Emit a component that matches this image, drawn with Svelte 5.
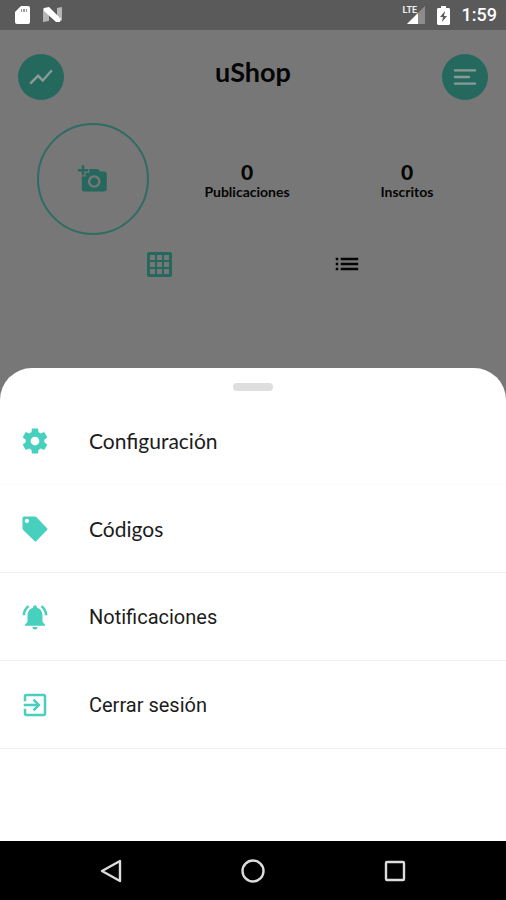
<script>
	const stats = [
		{ value: 0, label: "Publicaciones" },
		{ value: 0, label: "Inscritos" },
	];

	const menu = [
		{
			label: "Configuración",
			icon: "M19.43 12.98c.04-.32.07-.64.07-.98s-.03-.66-.07-.98l2.11-1.65c.19-.15.24-.42.12-.64l-2-3.46c-.12-.22-.39-.3-.61-.22l-2.49 1c-.52-.4-1.08-.73-1.69-.98l-.38-2.65C14.46 2.18 14.25 2 14 2h-4c-.25 0-.46.18-.49.42l-.38 2.65c-.61.25-1.17.59-1.69.98l-2.49-1c-.23-.09-.49 0-.61.22l-2 3.46c-.13.22-.07.49.12.64l2.11 1.65c-.04.32-.07.65-.07.98s.03.66.07.98l-2.11 1.65c-.19.15-.24.42-.12.64l2 3.46c.12.22.39.3.61.22l2.49-1c.52.4 1.08.73 1.69.98l.38 2.65c.03.24.24.42.49.42h4c.25 0 .46-.18.49-.42l.38-2.65c.61-.25 1.17-.59 1.69-.98l2.49 1c.23.09.49 0 .61-.22l2-3.46c.12-.22.07-.49-.12-.64l-2.11-1.65zM12 15.5c-1.93 0-3.5-1.57-3.5-3.5s1.57-3.5 3.5-3.5 3.5 1.57 3.5 3.5-1.57 3.5-3.5 3.5z",
		},
		{
			label: "Códigos",
			icon: "M3.4 2H12l1 .4 8.8 9.1c.3.3.3.8 0 1.1l-8.9 9.2c-.3.3-.8.3-1.1 0l-9.3-9-.5-1V3.4C2 2.6 2.6 2 3.4 2zM5.5 7.2a1.7 1.7 0 1 0 0-3.4 1.7 1.7 0 0 0 0 3.4z",
		},
		{
			label: "Notificaciones",
			roboto: true,
			icon: "M7.58 4.08L6.15 2.65C3.75 4.48 2.17 7.3 2.03 10.5h2c.15-2.65 1.51-4.97 3.55-6.42zm12.39 6.42h2c-.15-3.2-1.73-6.02-4.12-7.85l-1.42 1.43c2.02 1.45 3.39 3.77 3.54 6.42zM18 11c0-3.07-1.64-5.64-4.5-6.32V4c0-.83-.67-1.5-1.5-1.5s-1.5.67-1.5 1.5v.68C7.63 5.36 6 7.92 6 11v5l-2 2v1h16v-1l-2-2v-5zm-6 11c.14 0 .27-.01.4-.04.65-.14 1.18-.58 1.44-1.18.1-.24.15-.5.15-.78h-4c.01 1.1.9 2 2.01 2z",
		},
		{
			label: "Cerrar sesión",
			roboto: true,
			icon: "M10.09 15.59L11.5 17l5-5-5-5-1.41 1.41L12.67 11H3v2h9.67l-2.58 2.59zM19 3H5c-1.11 0-2 .9-2 2v4h2V5h14v14H5v-4H3v4c0 1.1.89 2 2 2h14c1.1 0 2-.9 2-2V5c0-1.1-.9-2-2-2z",
		},
	];
</script>

<div class="screen">
	<div class="status">
		<svg width="16" height="18" viewBox="0 0 16 18">
			<path fill="#fff" d="M6 0h7a2 2 0 0 1 2 2v14a2 2 0 0 1-2 2H2a2 2 0 0 1-2-2V6z" />
			<path fill="#999" d="M6 3h1v3H6zM8 3h2v3H8zM11 3h1v3h-1z" />
		</svg>
		<svg width="20" height="16" viewBox="0 0 20 16">
			<path fill="#b5b5b5" d="M0 1l6 4v9l-6 1zM14 1l5-1v14l-5-4z" />
			<path fill="#fff" d="M1 1l5-1 12 12-1 3h-4L1 4z" />
		</svg>
		<div class="signal">
			<span>LTE</span>
			<svg width="18" height="18" viewBox="0 0 18 18">
				<path fill="#8c8c8c" d="M18 0v18H0z" />
				<path fill="#fff" d="M11 7v11H0z" />
			</svg>
		</div>
		<svg width="13" height="19" viewBox="0 0 13 19">
			<path fill="#fff" d="M4 0h5v2h3l1 1v15l-1 1H1l-1-1V3l1-1h3z" />
			<path fill="#5a5a5a" d="M8 5l-5 6h3l-1 5 5-6H7z" />
		</svg>
		<time>1:59</time>
	</div>

	<main>
		<header>
			<button class="round" aria-label="Estadísticas">
				<svg width="28" height="28" viewBox="0 0 24 24">
					<path fill="currentColor" d="M3.5 18.49l6-6.01 4 4L22 6.92l-1.41-1.41-7.09 7.97-4-4L2 16.99z" />
				</svg>
			</button>
			<h1>uShop</h1>
			<button class="round" aria-label="Menú">
				<svg width="24" height="18" viewBox="0 0 24 18">
					<path stroke="currentColor" stroke-width="2.4" stroke-linecap="round" d="M2 2.4h20M2 9h14M2 15.6h20" />
				</svg>
			</button>
		</header>

		<section class="profile">
			<button class="photo" aria-label="Agregar foto">
				<svg width="30" height="30" viewBox="0 0 24 24">
					<path fill="currentColor" d="M3 4V1h2v3h3v2H5v3H3V6H0V4h3zm3 6V7h3V4h7l1.83 2H21c1.1 0 2 .9 2 2v12c0 1.1-.9 2-2 2H5c-1.1 0-2-.9-2-2V10h3zm7 9c2.76 0 5-2.24 5-5s-2.24-5-5-5-5 2.24-5 5 2.24 5 5 5zm-3.2-5c0 1.77 1.43 3.2 3.2 3.2s3.2-1.43 3.2-3.2-1.43-3.2-3.2-3.2-3.2 1.43-3.2 3.2z" />
				</svg>
			</button>
			{#each stats as stat}
				<p><b>{stat.value}</b>{stat.label}</p>
			{/each}
		</section>

		<div class="tabs">
			<button class="active" aria-label="Cuadrícula">
				<svg width="25" height="25" viewBox="0 0 25 25">
					<path fill="currentColor" fill-rule="evenodd" d="M2 0h21a2 2 0 0 1 2 2v21a2 2 0 0 1-2 2H2a2 2 0 0 1-2-2V2a2 2 0 0 1 2-2zM3 3v5h5V3zm7 0v5h5V3zm7 0v5h5V3zM3 10v5h5v-5zm7 0v5h5v-5zm7 0v5h5v-5zM3 17v5h5v-5zm7 0v5h5v-5zm7 0v5h5v-5z" />
				</svg>
			</button>
			<button aria-label="Lista">
				<svg width="30" height="30" viewBox="0 0 24 24">
					<path fill="currentColor" d="M3 13h2v-2H3v2zm0 4h2v-2H3v2zm0-8h2V7H3v2zm4 4h14v-2H7v2zm0 4h14v-2H7v2zM7 7v2h14V7H7z" />
				</svg>
			</button>
		</div>
	</main>

	<div class="sheet">
		<div class="handle"></div>
		{#each menu as item}
			<button class="item" class:roboto={item.roboto}>
				<svg width="30" height="30" viewBox="0 0 24 24">
					<path fill="#46d0bd" fill-rule="evenodd" d={item.icon} />
				</svg>
				{item.label}
			</button>
		{/each}
	</div>

	<nav>
		<button aria-label="Atrás">
			<svg width="26" height="26" viewBox="0 0 26 26">
				<path d="M22 3v20L4 13z" />
			</svg>
		</button>
		<button aria-label="Inicio">
			<svg width="26" height="26" viewBox="0 0 26 26">
				<circle cx="13" cy="13" r="10.5" />
			</svg>
		</button>
		<button aria-label="Recientes">
			<svg width="26" height="26" viewBox="0 0 26 26">
				<rect x="4" y="4" width="18" height="18" rx="1" />
			</svg>
		</button>
	</nav>
</div>

<style>
	:global(body) {
		margin: 0;
		background: #777;
	}
	.screen {
		display: flex;
		flex-direction: column;
		min-height: 100vh;
		font-family: Lato, sans-serif;
		color: #050505;
	}
	button {
		display: flex;
		align-items: center;
		justify-content: center;
		margin: 0;
		padding: 0;
		border: 0;
		background: none;
		color: inherit;
		font: inherit;
	}
	svg {
		display: block;
		flex: none;
	}
	.status {
		display: flex;
		align-items: center;
		height: 30px;
		padding: 0 9px 0 15px;
		gap: 12px;
		background: #5a5a5a;
	}
	.signal {
		position: relative;
		margin-left: auto;
	}
	.signal span {
		position: absolute;
		left: -4px;
		top: 0;
		font: 700 9px/9px Roboto, sans-serif;
		color: #eee;
	}
	time {
		font: 500 18px/30px Roboto, sans-serif;
		color: #fff;
	}
	main {
		flex: 1;
		padding-top: 24px;
	}
	header {
		display: flex;
		justify-content: space-between;
		padding: 0 18px;
	}
	.round {
		width: 46px;
		height: 46px;
		border-radius: 50%;
		background: #25695e;
		color: #8a9a97;
	}
	h1 {
		margin: 0;
		font-size: 27px;
		line-height: 36px;
		font-weight: 700;
	}
	.profile {
		display: flex;
		align-items: center;
		padding: 23px 19px 0 37px;
	}
	.photo {
		flex: none;
		width: 112px;
		height: 112px;
		margin-right: 18px;
		border: 2px solid #2f6c61;
		border-radius: 50%;
		color: #25695e;
	}
	p {
		flex: 1 1 0;
		margin: 0;
		padding-top: 2px;
		font-size: 14px;
		line-height: 16px;
		font-weight: 700;
		text-align: center;
	}
	p b {
		display: block;
		font-size: 21px;
		line-height: 24px;
	}
	.tabs {
		display: flex;
		padding: 14px 65px 0;
	}
	.tabs button {
		flex: 1;
	}
	.tabs .active {
		color: #25695e;
	}
	.sheet {
		padding-bottom: 92px;
		border-radius: 32px 32px 0 0;
		background: #fff;
	}
	.sheet::before {
		content: "";
		display: block;
		height: 15px;
	}
	.handle {
		width: 40px;
		height: 8px;
		margin: 0 auto 6px;
		border-radius: 4px;
		background: #dedede;
	}
	.item {
		width: 100%;
		height: 88px;
		padding: 0 20px;
		gap: 39px;
		justify-content: flex-start;
		border-bottom: 1px solid #f2f2f2;
		font-size: 21px;
		color: #1c1c1c;
	}
	.handle + .item {
		border-color: #fbfbfb;
	}
	.roboto {
		font-family: Roboto, sans-serif;
		font-size: 20px;
	}
	nav {
		display: flex;
		justify-content: center;
		height: 59px;
		background: #000;
	}
	nav button {
		width: 28%;
	}
	nav svg {
		fill: none;
		stroke: #dcdcdc;
		stroke-width: 2.4;
		stroke-linejoin: round;
	}
</style>
